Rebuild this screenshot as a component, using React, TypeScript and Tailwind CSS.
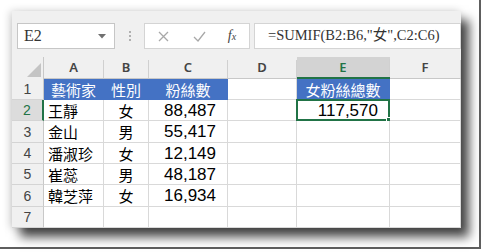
import React from "react";

const cols = [32, 60, 45, 79, 69, 93, 71];
const rowHeights = [21, 21, 22, 21, 21, 22, 21];

type Cell = { t?: string; kind?: "cjk" | "num"; align?: "left" | "center" | "right"; blue?: boolean; sel?: boolean };

const data: Cell[][] = [
  [
    { t: "藝術家", kind: "cjk", align: "center", blue: true },
    { t: "性別", kind: "cjk", align: "center", blue: true },
    { t: "粉絲數", kind: "cjk", align: "center", blue: true },
    {},
    { t: "女粉絲總數", kind: "cjk", align: "center", blue: true },
    {},
  ],
  [
    { t: "王靜", kind: "cjk", align: "left" },
    { t: "女", kind: "cjk", align: "center" },
    { t: "88,487", kind: "num", align: "right" },
    {},
    { t: "117,570", kind: "num", align: "right", sel: true },
    {},
  ],
  [
    { t: "金山", kind: "cjk", align: "left" },
    { t: "男", kind: "cjk", align: "center" },
    { t: "55,417", kind: "num", align: "right" },
    {},
    {},
    {},
  ],
  [
    { t: "潘淑珍", kind: "cjk", align: "left" },
    { t: "女", kind: "cjk", align: "center" },
    { t: "12,149", kind: "num", align: "right" },
    {},
    {},
    {},
  ],
  [
    { t: "崔蕊", kind: "cjk", align: "left" },
    { t: "男", kind: "cjk", align: "center" },
    { t: "48,187", kind: "num", align: "right" },
    {},
    {},
    {},
  ],
  [
    { t: "韓芝萍", kind: "cjk", align: "left" },
    { t: "女", kind: "cjk", align: "center" },
    { t: "16,934", kind: "num", align: "right" },
    {},
    {},
    {},
  ],
  [{}, {}, {}, {}, {}, {}],
];

function DataCell({ c, w }: { c: Cell; w: number }) {
  const justify =
    c.align === "left" ? "justify-start pl-[4px]" : c.align === "right" ? "justify-end pr-[11px]" : "justify-center";
  const font =
    c.kind === "num"
      ? "font-['Liberation_Sans',sans-serif] text-[17px]"
      : "font-['Noto_Sans_CJK_TC',sans-serif] text-[15px]";
  return (
    <div
      className={`relative flex items-center h-full border-r border-b ${
        c.blue ? "bg-[#4472c4] border-[#4472c4] text-white" : "bg-white border-[#d9d9d9] text-black"
      } ${justify}`}
      style={{ width: w }}
    >
      {c.t && <span className={`${font} leading-none`}>{c.t}</span>}
      {c.sel && (
        <>
          <div className="absolute -left-px -top-px -right-px -bottom-px border-2 border-[#217346]" />
          <div className="absolute -right-[4px] -bottom-[4px] w-[7px] h-[7px] bg-[#217346] border border-white" />
        </>
      )}
    </div>
  );
}

export default function App() {
  return (
    <div className="w-[484px] h-[252px] bg-white overflow-hidden">
      <div className="w-[481px] h-[249px] border-r-2 border-b-2 border-[#5e5e5e] pt-[11px] pl-[12px]">
        <div className="w-[449px] bg-[#f0f0f0] shadow-[8px_9px_10px_rgba(0,0,0,0.72),-2px_0_8px_rgba(0,0,0,0.18)]">
          {/* formula bar */}
          <div className="h-[46px] flex items-start pt-[12px] pl-[5px]">
            <div className="w-[98px] h-[26px] bg-white border border-[#c6c6c6] flex items-center justify-between pl-[6px] pr-[8px]">
              <span className="font-['Liberation_Serif',serif] text-[16px] text-[#333]">E2</span>
              <svg width="8" height="5" viewBox="0 0 8 5">
                <path d="M0 0 L8 0 L4 4.5 Z" fill="#707070" />
              </svg>
            </div>
            <div className="w-[29px] h-[26px] flex flex-col items-center justify-center gap-[2px]">
              <div className="w-[2px] h-[2px] bg-[#b0b0b0]" />
              <div className="w-[2px] h-[2px] bg-[#b0b0b0]" />
              <div className="w-[2px] h-[2px] bg-[#b0b0b0]" />
            </div>
            <div className="w-[106px] h-[26px] bg-white border border-[#d4d4d4] flex items-center">
              <div className="w-[36px] flex justify-center">
                <svg width="11" height="11" viewBox="0 0 11 11">
                  <path d="M1 1 L10 10 M10 1 L1 10" stroke="#a8a8a8" strokeWidth="1.3" fill="none" />
                </svg>
              </div>
              <div className="w-[36px] flex justify-center">
                <svg width="13" height="11" viewBox="0 0 13 11">
                  <path d="M1 6 L5 10 L12 1" stroke="#a8a8a8" strokeWidth="1.3" fill="none" />
                </svg>
              </div>
              <div className="w-[30px] flex justify-center">
                <span className="font-['Liberation_Serif',serif] italic text-[14px] text-[#444] leading-none">
                  f<span className="text-[10px]">x</span>
                </span>
              </div>
            </div>
            <div className="ml-[4px] flex-1 h-[26px] bg-white border border-[#d4d4d4] flex items-center pl-[13px]">
              <span className="font-['Liberation_Serif','Noto_Sans_CJK_TC',serif] text-[14.5px] text-[#333] whitespace-nowrap">
                =SUMIF(B2:B6,"女",C2:C6)
              </span>
            </div>
          </div>
          {/* column headers */}
          <div className="flex h-[22px]">
            <div className="flex items-end justify-end border-r border-[#c8c8c8] pr-[2px] pb-[2px]" style={{ width: cols[0] }}>
              <svg width="14" height="14" viewBox="0 0 14 14">
                <path d="M14 0 L14 14 L0 14 Z" fill="#c4c4c4" />
              </svg>
            </div>
            {["A", "B", "C", "D", "E", "F"].map((l, i) => {
              const sel = l === "E";
              return (
                <div
                  key={l}
                  className={`flex h-full ${sel ? "bg-[#d3d3d3] border-b-2 border-[#217346]" : "border-b border-[#c8c8c8]"}`}
                  style={{ width: cols[i + 1] }}
                >
                  <div className="flex-1 flex items-center justify-center">
                    <span
                      className={`font-['Noto_Sans',sans-serif] text-[13px] font-semibold leading-none ${
                        sel ? "text-[#217346]" : "text-[#444]"
                      }`}
                    >
                      {l}
                    </span>
                  </div>
                  <div className="w-px self-end h-[18px] bg-[#d0d0d0]" />
                </div>
              );
            })}
          </div>
          {/* rows */}
          {data.map((row, r) => {
            const sel = r === 1;
            return (
              <div key={r} className="flex" style={{ height: rowHeights[r] }}>
                <div
                  className={`flex items-center justify-center border-b border-[#d4d4d4] ${
                    sel ? "bg-[#dcdcdc] border-r-2 border-r-[#217346]" : "border-r border-r-[#c8c8c8]"
                  }`}
                  style={{ width: cols[0] }}
                >
                  <span
                    className={`font-['Liberation_Sans',sans-serif] text-[14px] leading-none ${
                      sel ? "text-[#217346]" : "text-[#444]"
                    }`}
                  >
                    {r + 1}
                  </span>
                </div>
                {row.map((c, i) => (
                  <DataCell key={i} c={c} w={cols[i + 1]} />
                ))}
              </div>
            );
          })}
        </div>
      </div>
    </div>
  );
}
